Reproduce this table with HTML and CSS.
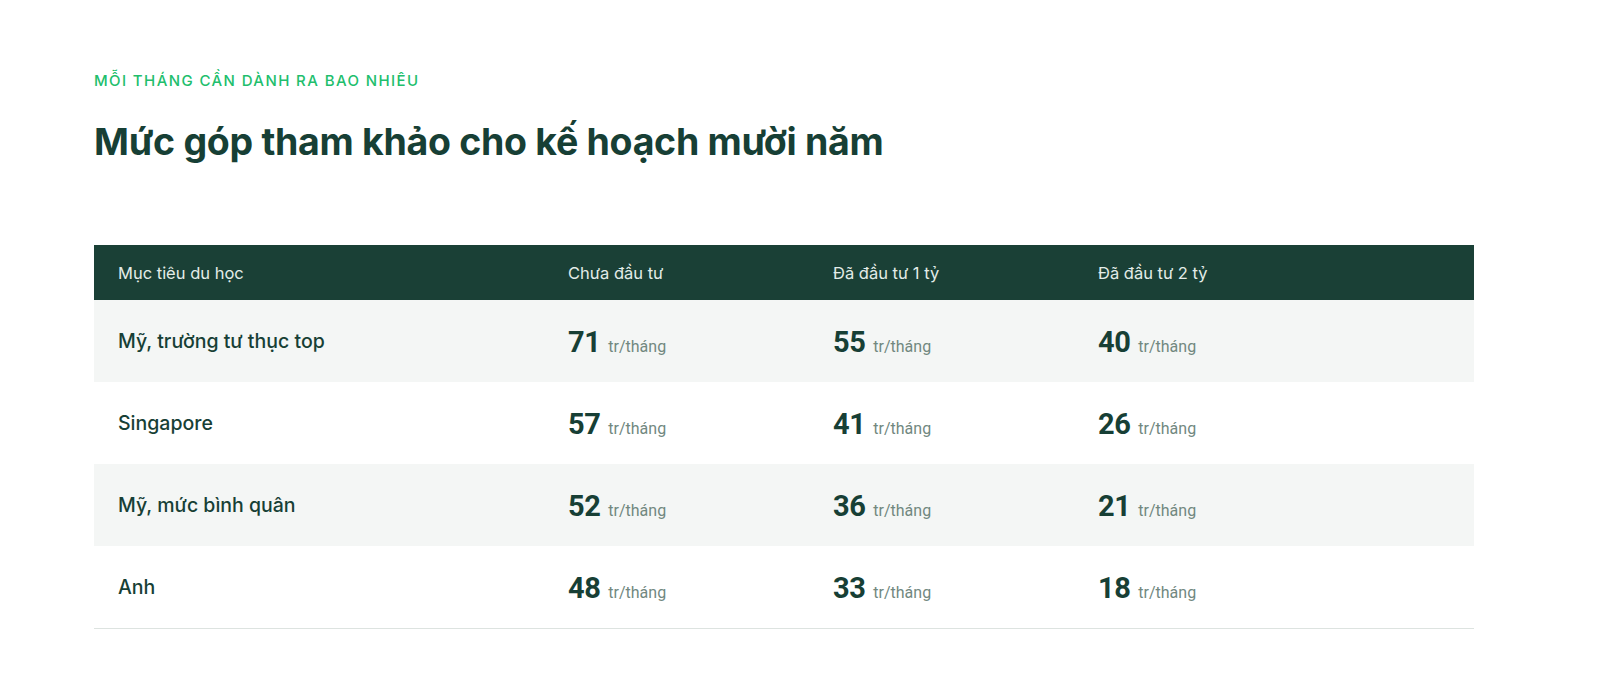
FILE: index.html
```html
<!DOCTYPE html>
<html lang="vi">
<head>
<meta charset="utf-8">
<link rel="stylesheet" href="styles.css">
</head>
<body>
<main class="wrap">
  <p class="eyebrow">MỖI THÁNG CẦN DÀNH RA BAO NHIÊU</p>
  <h1 class="title">Mức góp tham khảo cho kế hoạch mười năm</h1>
  <div class="table">
    <div class="row head">
      <div class="cell">Mục tiêu du học</div>
      <div class="cell">Chưa đầu tư</div>
      <div class="cell">Đã đầu tư 1 tỷ</div>
      <div class="cell">Đã đầu tư 2 tỷ</div>
    </div>
    <div class="row alt">
      <div class="cell label">Mỹ, trường tư thục top</div>
      <div class="cell"><span class="num">71</span><span class="unit">tr/tháng</span></div>
      <div class="cell"><span class="num">55</span><span class="unit">tr/tháng</span></div>
      <div class="cell"><span class="num">40</span><span class="unit">tr/tháng</span></div>
    </div>
    <div class="row">
      <div class="cell label">Singapore</div>
      <div class="cell"><span class="num">57</span><span class="unit">tr/tháng</span></div>
      <div class="cell"><span class="num">41</span><span class="unit">tr/tháng</span></div>
      <div class="cell"><span class="num">26</span><span class="unit">tr/tháng</span></div>
    </div>
    <div class="row alt">
      <div class="cell label">Mỹ, mức bình quân</div>
      <div class="cell"><span class="num">52</span><span class="unit">tr/tháng</span></div>
      <div class="cell"><span class="num">36</span><span class="unit">tr/tháng</span></div>
      <div class="cell"><span class="num">21</span><span class="unit">tr/tháng</span></div>
    </div>
    <div class="row last">
      <div class="cell label">Anh</div>
      <div class="cell"><span class="num">48</span><span class="unit">tr/tháng</span></div>
      <div class="cell"><span class="num">33</span><span class="unit">tr/tháng</span></div>
      <div class="cell"><span class="num">18</span><span class="unit">tr/tháng</span></div>
    </div>
  </div>
</main>
</body>
</html>
```
FILE: styles.css
```css
html, body {
  margin: 0;
  padding: 0;
  background: #ffffff;
}
body {
  font-family: Inter, "Noto Sans", sans-serif;
  color: #173f35;
}
.wrap {
  width: 1380px;
  margin: 0 0 0 94px;
  padding-top: 71px;
}
.eyebrow {
  margin: 0;
  font-size: 15px;
  line-height: 20px;
  letter-spacing: 1.4px;
  font-weight: 500;
  color: #21be6c;
}
.title {
  margin: 26px 0 0 0;
  font-size: 37.5px;
  line-height: 50px;
  font-weight: 700;
  letter-spacing: -0.3px;
  color: #173f35;
}
.table {
  margin-top: 78px;
  border-bottom: 1px solid #dde3e0;
}
.row {
  display: grid;
  grid-template-columns: 450px 265px 265px 400px;
  height: 82px;
  align-items: center;
}
.row.head {
  height: 55px;
  background: #1a4036;
  color: #e3ece8;
  font-size: 16.5px;
}
.row.alt {
  background: #f4f6f5;
}
.cell {
  padding-left: 24px;
  display: flex;
  align-items: baseline;
}
.label {
  font-size: 19.5px;
  font-weight: 500;
  color: #173f35;
}
.num {
  font-family: Roboto, "Noto Sans", sans-serif;
  font-size: 29px;
  font-weight: 700;
  letter-spacing: -0.5px;
  color: #173f35;
  position: relative;
  top: 1px;
}
.unit {
  font-family: Roboto, "Noto Sans", sans-serif;
  font-size: 16px;
  color: #71887f;
  margin-left: 8px;
  position: relative;
  top: 1px;
}
```
